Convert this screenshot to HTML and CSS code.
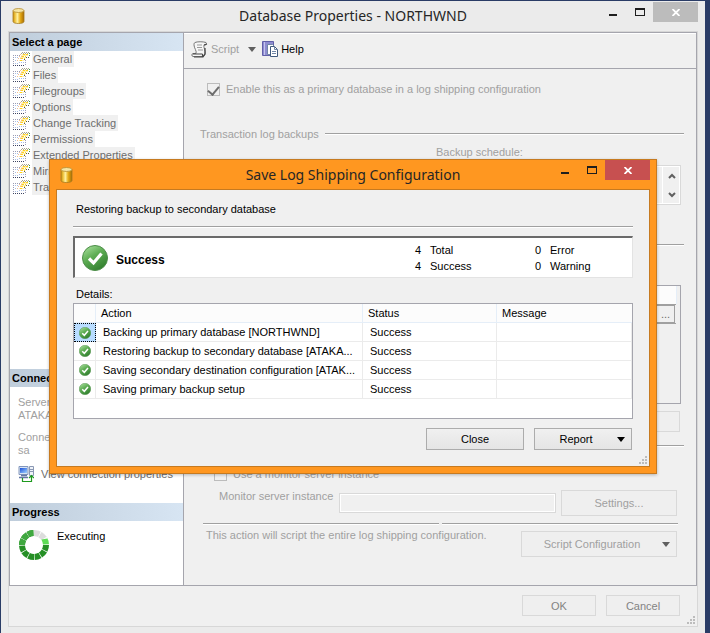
FILE: index.html
```html
<!DOCTYPE html>
<html lang="en">
<head>
<meta charset="utf-8">
<title>Database Properties - NORTHWND</title>
<link rel="stylesheet" href="styles.css">
</head>
<body>
<svg class="defs" width="0" height="0" aria-hidden="true">
  <defs>
    <linearGradient id="gold" x1="0" x2="1" y1="0" y2="0">
      <stop offset="0" stop-color="#c98f10"/><stop offset=".2" stop-color="#f0c540"/><stop offset=".4" stop-color="#fff0a0"/><stop offset=".65" stop-color="#e8ae18"/><stop offset="1" stop-color="#a86a00"/>
    </linearGradient>
    <linearGradient id="green" x1=".2" y1="0" x2=".8" y2="1">
      <stop offset="0" stop-color="#a4dd98"/><stop offset=".4" stop-color="#5fae55"/><stop offset="1" stop-color="#2c7a2a"/>
    </linearGradient>
    <linearGradient id="screen" x1="0" y1="0" x2="1" y2="1">
      <stop offset="0" stop-color="#1c50d8"/><stop offset="1" stop-color="#9fd2ff"/>
    </linearGradient>
    <symbol id="i-db" viewBox="0 0 12 16">
      <path d="M.5 2.500v11C.5 14.800 3 15.500 6 15.500s5.500-.7 5.500-2v-11z" fill="url(#gold)" stroke="#a57b22" stroke-width=".8"/>
      <ellipse cx="6" cy="2.500" rx="5.300" ry="2" fill="#f6e6a4" stroke="#b58b30" stroke-width=".8"/>
    </symbol>
    <symbol id="i-page" viewBox="0 0 17 14" shape-rendering="crispEdges">
      <path d="M0 3.500h7M.5 3v10M12.500 8v5" fill="none" stroke="#9a9cb4" stroke-dasharray="1 1"/>
      <path d="M0 13.500h12" stroke="#3c4260" stroke-dasharray="1 1"/>
      <path d="M2 5.500h3M2 8.500h3M2 11.500h3M6 10.500h6" stroke="#a9bfe6" stroke-dasharray="1 1"/>
      <path d="M4 8.500h3M5 6.500h3M6 4.500h3M7 2.500h3" stroke="#f3bf93" stroke-dasharray="1 1"/>
      <path d="M7 5h6M8 3.500h7M6 8h5M9 2h5" stroke="#fdeeb0"/>
      <path d="M9 4.500h4M8 6.500h4M7 8.500h3M10 2.500h5" stroke="#ffd21c" stroke-dasharray="2 1"/>
      <path d="M9 .5h8M8 1.500h7" stroke="#a9a68c" stroke-dasharray="1 1"/>
      <path d="M13 5.500h3M11 7.500h2" stroke="#5a5a45" stroke-dasharray="1 1"/>
      <path d="M16.500 1v4" stroke="#3d9b3d" stroke-dasharray="1 1"/>
    </symbol>
    <symbol id="i-ok" viewBox="0 0 26 26">
      <circle cx="13" cy="13" r="12.500" fill="url(#green)" stroke="#4c8d48"/>
      <path d="M7 13.500l4.500 4.500 8-9.500" fill="none" stroke="#fff" stroke-width="3.200"/>
    </symbol>
    <symbol id="i-grip" viewBox="0 0 8 8">
      <path d="M6 0h2v2H6zM3 3h2v2H3zM6 3h2v2H6zM0 6h2v2H0zM3 6h2v2H3zM6 6h2v2H6z" fill="#bcbcbc"/>
    </symbol>
    <symbol id="i-close" viewBox="0 0 8 7">
      <path d="M.5 0l7 7M7.500 0l-7 7" stroke="#fff" stroke-width="1.800"/>
    </symbol>
  </defs>
</svg>

<main class="window">
  <header class="titlebar">
    <svg class="db" width="13" height="16"><use href="#i-db"/></svg>
    <h1>Database Properties - NORTHWND</h1>
    <div class="caption">
      <button class="min" aria-label="Minimize"><i></i></button>
      <button class="max" aria-label="Maximize"><i></i></button>
      <button class="close" aria-label="Close window"><svg width="8" height="7"><use href="#i-close"/></svg></button>
    </div>
  </header>

  <div class="client">
    <div class="panes">
      <aside class="sidebar">
        <h2>Select a page</h2>
        <ul class="pages">
          <li><svg width="17" height="14"><use href="#i-page"/></svg><span>General</span></li>
          <li><svg width="17" height="14"><use href="#i-page"/></svg><span>Files</span></li>
          <li><svg width="17" height="14"><use href="#i-page"/></svg><span>Filegroups</span></li>
          <li><svg width="17" height="14"><use href="#i-page"/></svg><span>Options</span></li>
          <li><svg width="17" height="14"><use href="#i-page"/></svg><span>Change Tracking</span></li>
          <li><svg width="17" height="14"><use href="#i-page"/></svg><span>Permissions</span></li>
          <li><svg width="17" height="14"><use href="#i-page"/></svg><span>Extended Properties</span></li>
          <li><svg width="17" height="14"><use href="#i-page"/></svg><span>Mirroring</span></li>
          <li><svg width="17" height="14"><use href="#i-page"/></svg><span>Transaction Log Shipping</span></li>
        </ul>
        <h2>Connection</h2>
        <div class="connection">
          <p>Server:<br>ATAKAN</p>
          <p>Connection:<br>sa</p>
          <a href="#connection">
            <svg width="16" height="16" viewBox="0 0 16 16">
              <path d="M1 .5h9v8H1z" fill="#d8e4f4" stroke="#8296bc"/><path d="M2 2h7v5H2z" fill="url(#screen)"/>
              <path d="M3 9.500h6M1 11.500h9" stroke="#6478a4" stroke-width="1.500"/>
              <path d="M11.500.5h4v9h-4z" fill="#eef2f8" stroke="#8a98b4"/><path d="M12 3.500h3M12 5.500h3" stroke="#8a98b4"/>
              <path d="M4.500 12v3.500h9V10M11 12l2.500-2.500L16 12" fill="none" stroke="#1e9a1e" stroke-width="1.200"/>
            </svg>
            <span>View connection properties</span>
          </a>
        </div>
        <h2>Progress</h2>
        <div class="progress">
          <svg width="30" height="30" viewBox="-15 -15 30 30" fill="none" stroke-width="6">
            <circle r="12" stroke="#258f25" pathLength="120" stroke-dasharray="9 1" transform="rotate(-90)"/>
            <circle r="12" stroke="#fff" stroke-width="7" pathLength="120" stroke-dasharray="30 90" transform="rotate(-90)"/>
            <circle r="12" stroke="#dcdcdc" pathLength="120" stroke-dasharray="9 1 9 101" transform="rotate(-90)"/>
            <circle r="12" stroke="#5ddc55" pathLength="120" stroke-dasharray="9 111" transform="rotate(-30)"/>
            <circle r="12" stroke="#3fa83f" pathLength="120" stroke-dasharray="9 1 9 1 9 91" transform="rotate(180)"/>
          </svg>
          <span>Executing</span>
        </div>
      </aside>

      <section class="content">
        <div class="toolbar">
          <button class="tool" disabled>
            <svg width="17" height="17" viewBox="0 0 17 17">
              <path d="M4 1.500C6 .5 12 .5 15 1.500c1 1 0 3-2 2.500-1 2 2 6 1 9-.5 2-2 2.500-3 2.500H2c-1.500 0-1.500-3 0-3h3C6 10 3 7 3 4c0-1 0-2 1-2.500z" fill="#f6f6f6" stroke="#777"/>
              <path d="M6 4h5M6 6.500h5M7 9h5" stroke="#999"/>
              <path d="M2 13h9c1 0 1 2 0 2.500M13 4l3-1M14 7v6l-2 3H3" fill="none" stroke="#444" stroke-width="1.200"/>
            </svg>
            <span>Script</span><i class="arrow"></i>
          </button>
          <button class="tool help">
            <svg width="16" height="16" viewBox="0 0 16 16">
              <path d="M.5.5h11v14H.5z" fill="#8e8cd0" stroke="#615fa8"/><path d="M2.500 1v13" stroke="#c6c5ee"/>
              <path d="M5.500 3.500h5l2 2v8h-7z" fill="#fff" stroke="#7186a6"/>
              <path d="M8.500 5.500h4l3 3v7h-7z" fill="#fff" stroke="#40597c"/><path d="M12.500 5.500v3h3M10 10.500h4M10 12.500h4" fill="none" stroke="#7186a6"/>
            </svg>
            <span>Help</span>
          </button>
        </div>

        <div class="form">
          <label class="check enable"><input type="checkbox" checked disabled><span>Enable this as a primary database in a log shipping configuration</span></label>
          <h3 class="group"><span>Transaction log backups</span><i class="rule"></i></h3>
          <p class="schedule-label">Backup schedule:</p>
          <div class="schedule">
            <div class="scroll">
              <button disabled aria-label="Scroll up"><svg width="8" height="6" viewBox="0 0 8 6"><path d="M1 5l3-3 3 3" fill="none" stroke="#606060" stroke-width="2"/></svg></button>
              <button disabled aria-label="Scroll down"><svg width="8" height="6" viewBox="0 0 8 6"><path d="M1 1l3 3 3-3" fill="none" stroke="#606060" stroke-width="2"/></svg></button>
            </div>
          </div>
          <i class="rule"></i>
          <div class="databases">
            <div class="databases-head"></div>
            <div class="databases-row"><button disabled>...</button></div>
          </div>
          <button class="btn remove" disabled aria-label="Remove"></button>
          <i class="rule"></i>
          <label class="check monitor-check"><input type="checkbox" disabled><span>Use a monitor server instance</span></label>
          <div class="monitor">
            <label for="monitor">Monitor server instance</label>
            <input id="monitor" type="text" disabled>
            <button class="btn" disabled>Settings...</button>
          </div>
          <div class="split"><i class="rule"></i><i class="rule"></i></div>
          <div class="script-row">
            <p>This action will script the entire log shipping configuration.</p>
            <button class="btn menu" disabled><span>Script Configuration</span><i class="arrow"></i></button>
          </div>
        </div>
      </section>
    </div>
    <footer class="actions">
      <button class="btn" disabled>OK</button>
      <button class="btn" disabled>Cancel</button>
      <svg class="grip" width="8" height="8"><use href="#i-grip"/></svg>
    </footer>
  </div>
</main>

<section class="dialog" role="dialog" aria-labelledby="dialog-title">
  <header class="titlebar">
    <svg class="db" width="13" height="16"><use href="#i-db"/></svg>
    <h1 id="dialog-title">Save Log Shipping Configuration</h1>
    <div class="caption">
      <button class="min" aria-label="Minimize"><i></i></button>
      <button class="max" aria-label="Maximize"><i></i></button>
      <button class="close" aria-label="Close dialog"><svg width="8" height="7"><use href="#i-close"/></svg></button>
    </div>
  </header>
  <div class="dialog-body">
    <p class="task">Restoring backup to secondary database</p>
    <i class="rule"></i>
    <div class="summary">
      <svg width="26" height="26"><use href="#i-ok"/></svg>
      <strong>Success</strong>
      <dl class="counts"><dt>4</dt><dd>Total</dd><dt>0</dt><dd>Error</dd><dt>4</dt><dd>Success</dd><dt>0</dt><dd>Warning</dd></dl>
    </div>
    <p class="details">Details:</p>
    <div class="grid">
      <table>
        <colgroup><col class="c-icon"><col class="c-action"><col class="c-status"><col></colgroup>
        <thead><tr><th></th><th>Action</th><th>Status</th><th>Message</th></tr></thead>
        <tbody>
          <tr><td class="selected"><svg width="12" height="12"><use href="#i-ok"/></svg></td><td>Backing up primary database [NORTHWND]</td><td>Success</td><td></td></tr>
          <tr><td><svg width="12" height="12"><use href="#i-ok"/></svg></td><td>Restoring backup to secondary database [ATAKA...</td><td>Success</td><td></td></tr>
          <tr><td><svg width="12" height="12"><use href="#i-ok"/></svg></td><td>Saving secondary destination configuration [ATAK...</td><td>Success</td><td></td></tr>
          <tr><td><svg width="12" height="12"><use href="#i-ok"/></svg></td><td>Saving primary backup setup</td><td>Success</td><td></td></tr>
        </tbody>
      </table>
    </div>
    <div class="dialog-actions">
      <button class="btn">Close</button>
      <button class="btn menu"><span>Report</span><i class="arrow"></i></button>
    </div>
    <svg class="grip" width="8" height="8"><use href="#i-grip"/></svg>
  </div>
</section>
</body>
</html>
```
FILE: styles.css
```css
* { box-sizing: border-box; }
body {
  margin: 0;
  min-height: 100vh;
  display: flex;
  background: #2a3c66;
  color: #000;
  font: 11px/16px "Liberation Sans", Arial, sans-serif;
}
h1, h2, h3, p, ul, dl, dd { margin: 0; padding: 0; }
ul { list-style: none; }
svg { display: block; flex: none; }
.defs { position: absolute; }
button, input { font: inherit; color: inherit; margin: 0; padding: 0; }
button { border: 0; background: none; }

/* Window frame */
.window {
  flex: 1;
  min-width: 0;
  display: flex;
  flex-direction: column;
  margin: 1px 5px 0 1px;
  padding: 0 7px 7px;
  background: #ebebeb;
  border-bottom: 1px solid #cfcfcf;
}
.titlebar { position: relative; display: flex; align-items: center; height: 30px; }
.titlebar h1 {
  flex: 1;
  text-align: center;
  font: 400 14px/20px "Noto Sans", "Open Sans", sans-serif;
  color: #262626;
}
.db { position: absolute; left: 4px; top: 7px; }
.caption { position: absolute; right: 0; top: 1px; display: flex; height: 20px; }
.caption button { display: flex; justify-content: center; align-items: center; width: 27px; }
.caption .close { width: 45px; background: #bcbcbc; }
.min i { width: 8px; height: 2px; margin-top: 6px; background: #1e1e1e; }
.max i { width: 10px; height: 8px; border: 1px solid #1e1e1e; border-top-width: 2px; }

.client {
  flex: 1;
  display: flex;
  flex-direction: column;
  background: #f0f0f0;
  border: 1px solid #d7d7d7;
}
.panes { flex: 1; display: flex; border: 1px solid #a5a5ad; }

/* Sidebar */
.sidebar {
  flex: none;
  display: flex;
  flex-direction: column;
  width: 174px;
  background: #fff;
  border-right: 1px solid #a5a5ad;
}
.sidebar h2 {
  padding-left: 2px;
  font-size: 11px;
  line-height: 18px;
  background: linear-gradient(90deg, #bfcddb, #d7e5f3);
}
.pages { flex: 1; color: #6d6d6d; }
.pages li { display: flex; align-items: center; gap: 2px; padding-left: 3px; }
.pages span { padding: 0 2px 0 1px; background: #f0f0f0; white-space: nowrap; overflow: hidden; }
.connection { padding: 9px 0 21px 8px; color: #a0a0a0; line-height: 13px; }
.connection p { margin-bottom: 9px; }
.connection a { display: flex; align-items: center; gap: 7px; height: 16px; color: #6d6d6d; text-decoration: none; white-space: nowrap; }
.progress { display: flex; gap: 8px; padding: 7px 0 17px 9px; height: 64px; }
.progress svg { margin-top: 2px; }

/* Main page */
.content { flex: 1; min-width: 0; display: flex; flex-direction: column; }
.toolbar {
  display: flex;
  align-items: center;
  gap: 6px;
  height: 36px;
  padding: 0 7px 4px;
  border-top: 1px solid #fff;
  border-bottom: 1px solid #a5a5ad;
}
.tool { display: flex; align-items: center; gap: 3px; }
.tool:disabled { color: #a0a0a0; }
.tool .arrow { margin-left: 6px; }
.arrow { width: 0; height: 0; border: 4px solid transparent; border-top: 5px solid #606060; border-bottom: 0; }
.form { flex: 1; display: flex; flex-direction: column; padding: 12px 12px 28px 16px; color: #a0a0a0; }
.rule { display: block; height: 2px; background: #a0a0a0; border-bottom: 1px solid #fff; }
.check { display: flex; align-items: center; gap: 6px; height: 16px; }
.check input {
  appearance: none;
  display: grid;
  place-items: center;
  width: 13px;
  height: 13px;
  border: 1px solid #bcbcbc;
}
.check input:checked::after {
  content: "";
  width: 5px;
  height: 9px;
  margin-bottom: 2px;
  border: solid #6d6d6d;
  border-width: 0 2px 2px 0;
  transform: rotate(40deg);
}
.enable { margin-left: 7px; }
.group { display: flex; align-items: center; gap: 6px; margin-top: 29px; font: inherit; }
.group .rule { flex: 1; }
.schedule-label { margin: 2px 0 5px 236px; }
.schedule {
  display: flex;
  justify-content: flex-end;
  height: 40px;
  margin: 0 3px 39px 236px;
  border: 1px solid #d9d9d9;
  background: #f0f0f0;
  outline: 1px solid #fff;
  outline-offset: -2px;
}
.scroll { display: flex; flex-direction: column; width: 18px; border-left: 1px solid #fff; }
.scroll button { flex: 1; display: grid; place-items: center; }
.databases { height: 119px; margin: 39px 3px 7px 0; border: 1px solid #a5a5ad; }
.databases-head { height: 18px; margin-right: 3px; background: #fcfcfc; border-right: 1px solid #e5eef8; }
.databases-row { display: flex; justify-content: flex-end; height: 20px; margin-right: 4px; padding-right: 1px; border: solid #a0a0a0; border-width: 1px 0; }
.databases-row button { width: 19px; border: 1px solid #a0a0a0; line-height: 14px; color: #6d6d6d; }
.btn { border: 1px solid #acacac; background: linear-gradient(#f0f0f0, #e5e5e5); }
.btn:disabled { border-color: #d9d9d9; background: #efefef; color: #a0a0a0; }
.remove { align-self: flex-end; width: 75px; height: 21px; margin: 0 4px 13px 0; }
.monitor-check { margin: 19px 0 8px 14px; }
.monitor { display: flex; align-items: center; gap: 5px; margin-right: 7px; padding-left: 19px; }
.monitor label { width: 115px; height: 26px; line-height: 12px; white-space: nowrap; }
.monitor input { flex: 1; min-width: 0; height: 20px; border: 1px solid #d9d9d9; background: #f0f0f0; outline: 1px solid #fff; outline-offset: -2px; }
.monitor .btn { width: 116px; height: 26px; }
.split { display: flex; gap: 3px; margin: 7px 6px 6px 3px; }
.split .rule { flex: 1; }
.script-row { display: flex; justify-content: space-between; align-items: flex-start; margin-right: 7px; padding-left: 6px; }
.script-row p { line-height: 8px; }
.script-row .btn { width: 156px; height: 26px; }
.menu { display: flex; align-items: center; padding-right: 6px; }
.menu span { flex: 1; }
.actions { position: relative; display: flex; justify-content: flex-end; gap: 10px; padding: 9px 17px 10px 0; }
.actions .btn { width: 74px; height: 21px; color: #838383; }
.grip { position: absolute; right: 2px; bottom: 2px; }

/* Dialog over the properties window */
.dialog {
  position: absolute;
  left: 49px;
  right: 53px;
  top: 159px;
  padding: 0 6px 6px;
  background: #ff9720;
  border: 1px solid #c67a20;
  box-shadow: 0 1px 3px rgba(0, 0, 0, .25);
}
.dialog .titlebar { height: 29px; }
.dialog .caption { top: 0; }
.dialog .close { background: #c75050; }
.dialog-body { position: relative; padding: 11px 16px 16px; background: #f0f0f0; border: 1px solid #c67a20; }
.task { padding: 0 3px; margin-bottom: 9px; }
.summary {
  display: flex;
  align-items: center;
  gap: 8px;
  height: 42px;
  margin: 8px 0;
  padding-left: 7px;
  background: #fff;
  border: 2px solid #6a6a6a;
  border-right: 1px solid #e3e3e3;
  border-bottom: 1px solid #e3e3e3;
}
.summary strong { flex: 1; padding-top: 4px; font-size: 12px; }
.counts { display: grid; grid-template-columns: 15px 105px 15px 82px; }
.details { padding-left: 3px; margin-bottom: 1px; }
.grid { height: 116px; background: #fff; border: 1px solid #a5a5ad; }
table { width: 100%; table-layout: fixed; border-collapse: separate; border-spacing: 0; }
.c-icon { width: 22px; }
.c-action { width: 267px; }
.c-status { width: 134px; }
th { height: 19px; padding: 0 5px; font-weight: 400; text-align: left; line-height: 16px; background: #fcfcfc; border-right: 1px solid #e5eef8; border-bottom: 1px solid #e5eef8; }
td { height: 19px; padding: 0 7px; white-space: nowrap; overflow: hidden; border-right: 1px solid #ebebeb; border-bottom: 1px solid #ebebeb; }
td:first-child { padding: 0 0 0 5px; }
.selected { background: #b8dcff; border: 1px dotted #000; }
td.selected:first-child { padding-left: 4px; }
th:last-child { border-right: 0; }
.dialog-actions { display: flex; justify-content: flex-end; gap: 10px; margin-top: 9px; padding-right: 1px; }
.dialog-actions .btn { width: 98px; height: 22px; }
.dialog-actions .arrow { border-top-color: #000; }
```
